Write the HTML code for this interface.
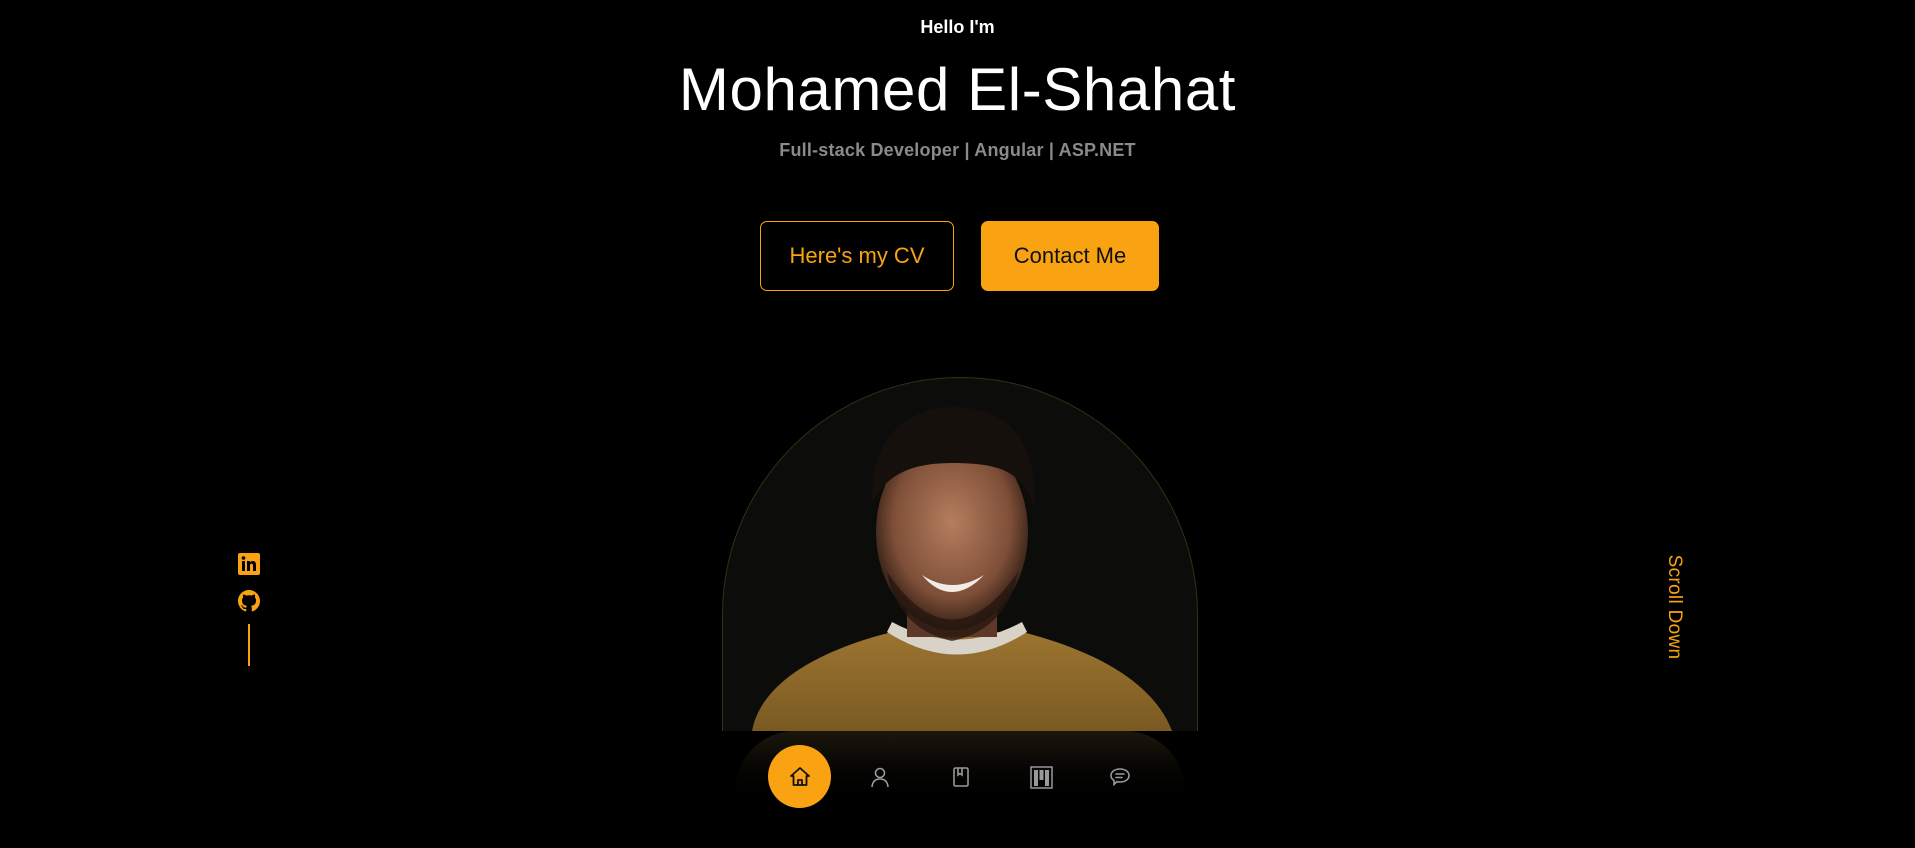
<!DOCTYPE html>
<html><head><meta charset="utf-8"><style>
*{margin:0;padding:0;box-sizing:border-box}
body{width:1915px;height:848px;background:#000;overflow:hidden;position:relative;font-family:"Liberation Sans",sans-serif;color:#fff}
.c{position:absolute;left:0;width:1915px;text-align:center;white-space:nowrap}
.btn{position:absolute;top:221px;height:70px;border-radius:7px;font-size:22px;display:flex;align-items:center;justify-content:center}
</style></head><body>
<div class="c" style="top:17px;font-size:18px;font-weight:600">Hello I'm</div>
<div class="c" style="top:55px;font-size:60px;letter-spacing:0.6px">Mohamed El-Shahat</div>
<div class="c" style="top:140px;font-size:18px;font-weight:600;color:#8a8a8a;letter-spacing:0.2px">Full-stack Developer | Angular | ASP.NET</div>
<div class="btn" style="left:760px;width:194px;border:1px solid #f9a312;color:#f9a312">Here's my CV</div>
<div class="btn" style="left:981px;width:178px;background:#f9a312;color:#111">Contact Me</div>

<svg style="position:absolute;left:722px;top:377px" width="476" height="354" viewBox="0 0 476 354">
<defs>
<clipPath id="a"><path d="M0 354V238A238 238 0 0 1 476 238V354Z"/></clipPath>
<radialGradient id="sk" cx="50%" cy="45%" r="55%"><stop offset="0" stop-color="#b57d5e"/><stop offset="0.7" stop-color="#7e4f38"/><stop offset="1" stop-color="#301d14"/></radialGradient>
<linearGradient id="sw" x1="0" y1="0" x2="0" y2="1"><stop offset="0" stop-color="#9c7430"/><stop offset="1" stop-color="#7a5a22"/></linearGradient>
</defs>
<g clip-path="url(#a)">
<rect width="476" height="354" fill="#0c0c0a"/>
<path d="M30 354C40 300 110 270 170 255L300 255C360 270 430 300 450 354Z" fill="url(#sw)"/>
<path d="M165 255Q235 300 305 255L300 245Q235 280 170 245Z" fill="#d8d2c8"/>
<rect x="185" y="200" width="90" height="60" fill="#5e3828"/>
<ellipse cx="230" cy="155" rx="76" ry="98" fill="url(#sk)"/>
<path d="M150 125C148 65 180 32 230 30C290 30 316 68 312 130C300 98 285 86 230 86C180 86 162 104 150 125Z" fill="#15100c"/>
<path d="M165 195Q230 290 296 195Q285 252 230 264Q176 252 165 195Z" fill="#24160f" opacity="0.75"/>
<path d="M200 198Q230 218 262 198Q246 215 230 215Q214 215 200 198Z" fill="#f1ece4"/>
</g>
<path d="M0.5 354V238A237.5 237.5 0 0 1 475.5 238V354" fill="none" stroke="#3a2e10" stroke-width="1"/>
</svg>

<div style="position:absolute;left:735px;top:731px;width:450px;height:117px;border-radius:60px 60px 0 0;background:linear-gradient(#1c170d 0%,#070604 30%,#000 55%)"></div>
<div style="position:absolute;left:768px;top:745px;width:63px;height:63px;border-radius:50%;background:#f9a312"></div>
<svg style="position:absolute;left:788px;top:765px" width="24" height="24" viewBox="0 0 24 24" fill="none" stroke="#111" stroke-width="1.8" stroke-linejoin="round"><path d="M3 11L12 3L21 11H18.5V20H5.5V11Z"/><path d="M10 20V15H14V20"/></svg>
<svg style="position:absolute;left:869px;top:766px" width="22" height="22" viewBox="0 0 22 22" fill="none" stroke="#999" stroke-width="1.6"><circle cx="11" cy="7" r="4.5"/><path d="M3 21C3.5 15 7 13 11 13C15 13 18.5 15 19 21"/></svg>
<svg style="position:absolute;left:950px;top:766px" width="22" height="22" viewBox="0 0 22 22" fill="none" stroke="#999" stroke-width="1.6"><rect x="4" y="2" width="14" height="18" rx="1.5"/><path d="M8 2V9L10 7.5L12 9V2"/></svg>
<svg style="position:absolute;left:1030px;top:766px" width="23" height="23" viewBox="0 0 23 23"><rect x="1" y="1" width="21" height="21" fill="none" stroke="#999" stroke-width="1.5"/><rect x="4" y="4" width="4" height="16" fill="#999"/><rect x="9.5" y="4" width="4" height="10" fill="#999"/><rect x="15" y="4" width="4" height="16" fill="#999"/></svg>
<svg style="position:absolute;left:1109px;top:766px" width="22" height="22" viewBox="0 0 22 22" fill="none" stroke="#999" stroke-width="1.6" stroke-linecap="round"><path d="M11 3C16 3 20 5.5 20 9.5C20 13.5 16 16 11 16C10 16 9 16 8 15.6L5 18.5V14.5C3 13.3 2 11.5 2 9.5C2 5.5 6 3 11 3Z"/><path d="M7 8H15M7 11.5H13"/></svg>

<svg style="position:absolute;left:238px;top:553px" width="22" height="22" viewBox="0 0 22 22"><rect width="22" height="22" rx="2" fill="#f9a312"/><rect x="4" y="8" width="3" height="10" fill="#000"/><circle cx="5.5" cy="5" r="1.8" fill="#000"/><path d="M9 8H12V9.5C13 7.5 18 7 18 11.5V18H15V12.5C15 10 12 10 12 12.5V18H9Z" fill="#000"/></svg>
<svg style="position:absolute;left:238px;top:590px" width="22" height="22" viewBox="0 0 16 16"><path fill="#f9a312" d="M8 0C3.58 0 0 3.58 0 8c0 3.54 2.29 6.53 5.47 7.59.4.07.55-.17.55-.38 0-.19-.01-.82-.01-1.49-2.01.37-2.53-.49-2.69-.94-.09-.23-.48-.94-.82-1.13-.28-.15-.68-.52-.01-.53.63-.01 1.08.58 1.23.82.72 1.21 1.87.87 2.33.66.07-.52.28-.87.51-1.07-1.78-.2-3.64-.89-3.64-3.95 0-.87.31-1.59.82-2.15-.08-.2-.36-1.02.08-2.12 0 0 .67-.21 2.2.82.64-.18 1.32-.27 2-.27.68 0 1.36.09 2 .27 1.53-1.04 2.2-.82 2.2-.82.44 1.1.16 1.92.08 2.12.51.56.82 1.27.82 2.15 0 3.07-1.87 3.75-3.65 3.95.29.25.54.73.54 1.48 0 1.07-.01 1.93-.01 2.2 0 .21.15.46.55.38A8.013 8.013 0 0016 8c0-4.42-3.58-8-8-8z"/></svg>
<div style="position:absolute;left:248px;top:624px;width:2px;height:42px;background:#f9a312"></div>

<div style="position:absolute;left:1674px;top:607px;transform:translate(-50%,-50%) rotate(90deg);font-size:19px;color:#f9a312;white-space:nowrap;letter-spacing:0.3px">Scroll Down</div>
</body></html>
